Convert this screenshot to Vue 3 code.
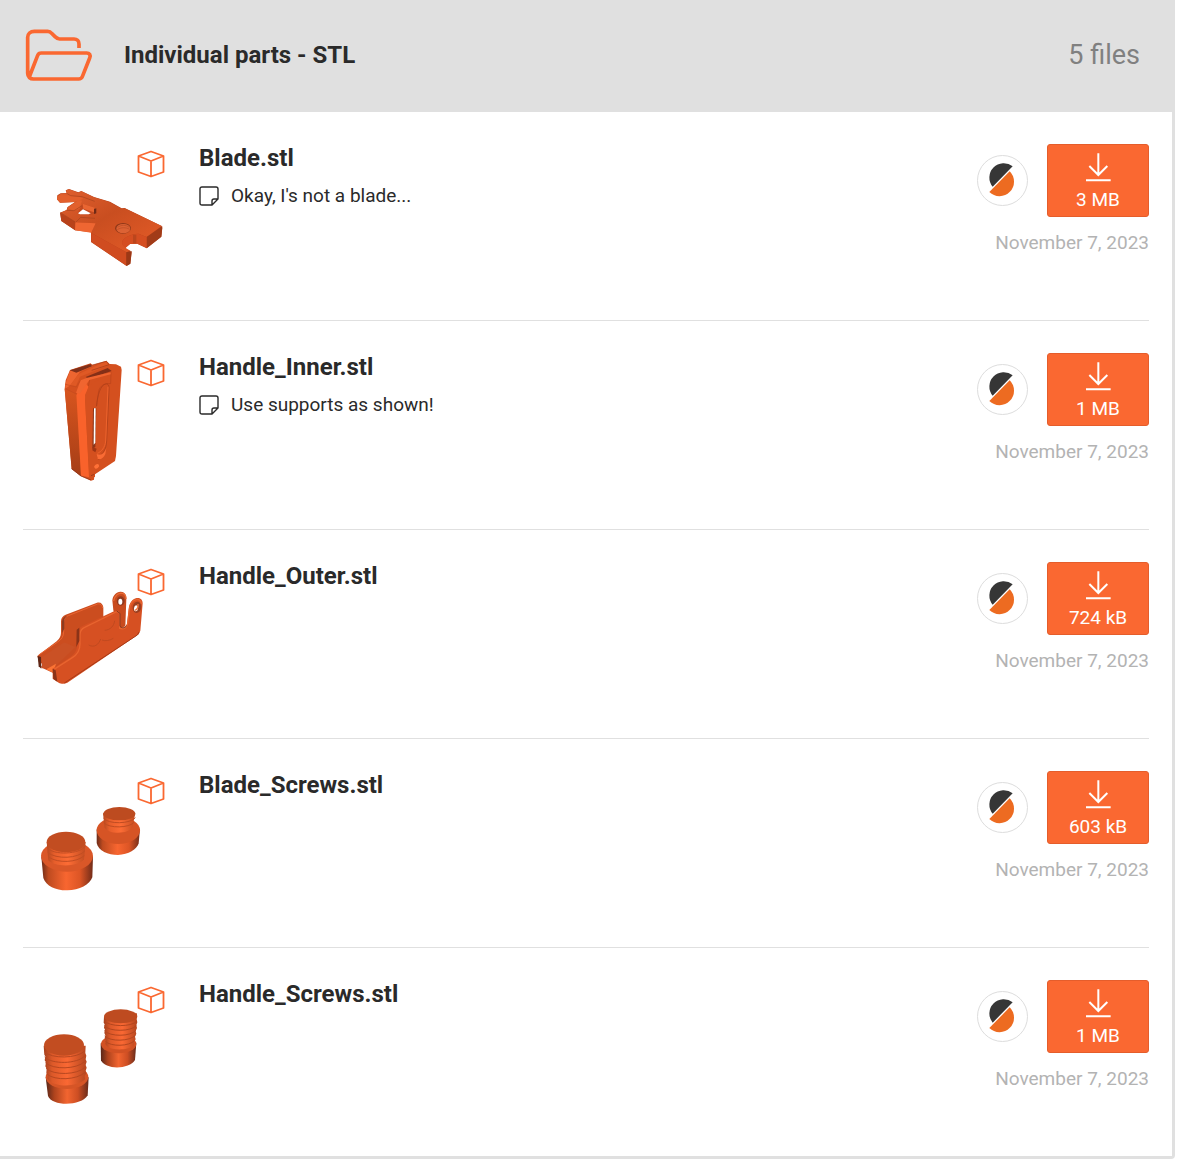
<template>
  <section class="folder">
    <header class="folder-header">
      <svg class="folder-icon" viewBox="75 84 204 162" aria-hidden="true">
        <path d="M237 144v-12c0-9-6-15-15-15h-43c-7 0-10-3-14-7l-10-10c-3-4-7-6-12-6h-40c-12 0-20 8-20 18v108c0 11 8 17 17 17h136c6 0 9-2 11-7l22-56c4-9-1-15-9-15H124c-6 0-9 2-11 7l-24 62" />
      </svg>
      <h2 class="folder-title">Individual parts - STL</h2>
      <span class="folder-count">{{ files.length }} files</span>
    </header>

    <ul class="files">
      <li v-for="file in files" :key="file.name" class="file">
        <div class="thumb">
          <svg v-if="file.shape === 'blade'" class="model" viewBox="9 12 456 432" aria-hidden="true">
            <defs>
              <linearGradient id="bladeTop" x1="0" y1="0" x2="1" y2="1">
                <stop offset="0" stop-color="#e0602f" />
                <stop offset="0.45" stop-color="#c94e20" />
                <stop offset="1" stop-color="#e65c28" />
              </linearGradient>
            </defs>
            <path d="M137 151L147 147L175 157L184 153L222 171L270 185L305 205L314 204L425 258L427 264L424 290L380 325L352 311L330 312L315 325L335 337L331 371L320 378L213 306V277L165 271L124 243L120 218L140 210L142 202L165 186L120 188L111 178L112 166L122 160L140 159z" fill="#b8421a" />
            <path d="M114 168L122 161L140 160L138 151L147 148L175 158L184 154L222 172L268 186L305 206L314 205L425 258L380 291L355 281C332 282 308 293 306 307C306 315 315 325 332 332L319 337L214 279L227 250L166 247L121 219L140 210L145 200L178 178z" fill="url(#bladeTop)" />
            <path d="M112 169L124 164L180 171L190 176L165 186L120 188L111 178z" fill="#e2602d" />
            <path d="M142 205L176 180L186 182L178 206L162 212z" fill="#e2602d" />
            <path d="M173 219L188 191L229 205V219L212 224H185z" fill="#c34a20" />
            <path d="M188 191L229 205V219L190 206z" fill="#e96632" />
            <path d="M174 220L189 208L212 220L206 223H180z" fill="#fff" />
            <path d="M222 206L229 205V220L222 222z" fill="#702a16" />
            <path d="M121 219L166 247V271L124 243z" fill="#b8421a" />
            <path d="M166 247L227 250L214 278L165 271z" fill="#ee6632" />
            <path d="M214 279L319 337V377L214 306z" fill="#d04c20" />
            <path d="M319 337L335 333L331 371L319 378z" fill="#9b3816" />
            <path d="M380 291L427 259L424 290L380 325z" fill="#a13b18" />
            <path d="M306 307C308 293 332 282 355 281L380 291V324L352 311L330 312L316 324C309 319 306 314 306 307z" fill="#d54e21" />
            <path d="M344 284v26" stroke="#bb461d" stroke-width="10" />
            <ellipse cx="309" cy="265" rx="24" ry="16" fill="#8f3819" />
            <ellipse cx="310" cy="266" rx="21" ry="14" fill="#dc6234" />
            <path d="M293 262c10-8 24-8 35 0M292 269c10-7 25-8 37-1" fill="none" stroke="#b84b24" stroke-width="2" />
            <path d="M140 160l12 7 34 3 38 14M140 211l22 1 24-15M122 218l44 28M168 246l14-14 43 3" fill="none" stroke="#a8421d" stroke-width="2" />
          </svg>

          <svg v-else-if="file.shape === 'inner'" class="model" viewBox="9 24 456 432" aria-hidden="true">
            <defs>
              <linearGradient id="innerSide" x1="0" y1="0" x2="0" y2="1">
                <stop offset="0" stop-color="#d8551f" />
                <stop offset="1" stop-color="#a53d16" />
              </linearGradient>
            </defs>
            <path d="M150 75L212 55L217 60L259 47L269 57L288 58L303 65L305 75L288 332L285 348L225 388V396H222V404L213 407L183 394L155 372L134 131L137 106z" fill="#d4501f" />
            <path d="M134 131L171 148L183 394L155 372z" fill="url(#innerSide)" />
            <path d="M169 148L199 117L205 125L195 166L208 397L183 392z" fill="#f9622b" />
            <path d="M195 150L208 120L270 86L303 70L285 341L224 386L222 403L207 398z" fill="#d4501f" />
            <path d="M205 123L210 100L273 82L272 116C255 113 240 122 236 138L229 185" fill="none" stroke="#b9431a" stroke-width="2" />
            <path d="M136 117L150 78L214 57L217 64L180 80L152 120L136 131z" fill="#ed6530" />
            <path d="M150 76L212 57L216 64L169 83z" fill="#80301a" />
            <path d="M150 121L176 87L258 49L269 59L180 95L168 123z" fill="#df5925" />
            <path d="M197 96L263 69L275 78L206 101z" fill="#842f17" />
            <path d="M213 61L259 49L267 59L215 76" fill="none" stroke="#a33a17" stroke-width="2" />
            <path d="M182 106L202 98L272 82V88L208 105L180 146L168 143z" fill="#f06530" />
            <path d="M136 118l33 8 12-20M136 131l35 17" fill="none" stroke="#c44a1e" stroke-width="2" />
            <path d="M230 183C232 150 242 120 257 117C265 115 268 122 267 135L260 288C259 311 250 326 236 335" fill="none" stroke="#a93c18" stroke-width="2" />
            <path d="M264 125L257 288C255 308 244 320 232 325" fill="none" stroke="#ed632d" stroke-width="3" />
            <path d="M219 190L217 311L226 306L229 190z" fill="#8d3519" />
            <path d="M222 190h5l-1 103-5 6z" fill="#fff" />
            <path d="M218 306l12 5-4 11-9-6zM231 334l14 3-9 8z" fill="#9e3515" />
            <path d="M230 327c15 7 24-4 29-18l-3 18c-5 12-14 18-23 15z" fill="#f96b34" />
            <ellipse cx="230" cy="364" rx="8" ry="6" transform="rotate(-35 230 364)" fill="#ff7138" />
            <path d="M155 371l28 22 30 12M213 392l10-4" fill="none" stroke="#85331c" stroke-width="2" />
          </svg>

          <svg v-else-if="file.shape === 'outer'" class="model" viewBox="9 6 456 432" aria-hidden="true">
            <path d="M62 322L98 338L190 290L250 165L130 240z" fill="#c94c20" />
            <path d="M52 288l54-41c12-9 17-17 17-31v-32c0-11 6-16 14-20l94-36c11-3 18 4 19 14v38l-100 86-50 63-43-23z" fill="#cb4d1f" />
            <path d="M56 285l57-39c12-8 18-17 18-31v-27c0-12 6-18 14-21l88-35c8-2 13 4 15 12" fill="none" stroke="#ea6431" stroke-width="3" />
            <path d="M53 288l10 3 1 35-8-7z" fill="#5f2716" />
            <path d="M65 292l68-45 33 14-62 60-38 4z" fill="#ca5125" />
            <path d="M79 328L108 311L100 338z" fill="#fb7434" />
            <path d="M280 151l-3-30c2-16 12-25 24-26 12-1 18 9 18 21l-3 83-19 7z" fill="#c84b1e" />
            <path d="M281 123c3-18 15-25 26-23 8 1 11 9 11 17" fill="none" stroke="#e66a36" stroke-width="4" />
            <ellipse cx="302" cy="123" rx="12" ry="14" fill="#90391e" />
            <ellipse cx="301" cy="125" rx="6" ry="9" fill="#fff" />
            <path d="M98 326l50-33c18-11 24-25 24-44v-28c0-11 6-18 14-22l96-45c7-3 13-2 17 4l2 42c11 6 17 2 20-8l5-44c1-18 11-32 24-34 12-2 18 6 18 16l-7 82-5 11-214 145c-8 5-19 4-26 0l-18-12z" fill="#d65022" />
            <path d="M102 328l55-35c16-10 23-23 23-42v-27c0-11 5-18 14-22l94-46c7-3 12 3 11 9v40c14 4 21-3 24-14l5-43c2-16 10-27 21-29 9-2 15 4 15 13" fill="none" stroke="#e8642f" stroke-width="4" />
            <path d="M98 326l9 5 5 34-12-8zM170 209l8-6v40l-9 18z" fill="#8b3318" />
            <path d="M290 153l10 7v39c8 7 13 5 20-2" fill="none" stroke="#84351d" stroke-width="3" />
            <ellipse cx="351" cy="142" rx="13" ry="17" transform="rotate(10 351 142)" fill="#9b3f20" />
            <ellipse cx="348" cy="145" rx="6" ry="9" transform="rotate(10 348 145)" fill="#fff" />
            <path d="M344 151c8-2 11-9 10-19" fill="none" stroke="#f17943" stroke-width="4" />
            <path d="M206 255c17 9 30-1 36-18M246 240c10 4 22 2 34-5M254 211c16-1 28-12 30-29" fill="none" stroke="#b5451e" stroke-width="2" />
            <path d="M357 216l-5 9-219 144" fill="none" stroke="#a83a17" stroke-width="3" />
            <path d="M126 188c0-12 6-17 15-21l-8 10v29l-7 13z" fill="#8d3b20" />
          </svg>

          <svg v-else-if="file.shape === 'bladeScrews'" class="model" viewBox="9 3 456 432" aria-hidden="true">
            <defs>
              <linearGradient id="metal">
                <stop offset="0" stop-color="#6c2b18" />
                <stop offset="0.14" stop-color="#bf4b20" />
                <stop offset="0.48" stop-color="#f86630" />
                <stop offset="0.75" stop-color="#dc5525" />
                <stop offset="1" stop-color="#712b18" />
              </linearGradient>
              <linearGradient id="thread">
                <stop offset="0" stop-color="#b5481f" />
                <stop offset="0.2" stop-color="#e65e2b" />
                <stop offset="0.55" stop-color="#fc6c35" />
                <stop offset="1" stop-color="#c24d21" />
              </linearGradient>
            </defs>
            <path d="M230 178v41c5 24 34 36 64 36 31-1 57-17 62-35l4-43z" fill="url(#metal)" />
            <ellipse cx="295" cy="181" rx="65" ry="41" fill="#d65425" />
            <path d="M249 130l5 43c12 21 72 20 83-1l9-42z" fill="url(#thread)" />
            <path d="M250 144c14 20 82 18 96-1M251 158c16 18 78 16 91-1" fill="none" stroke="#c04c22" stroke-width="3" />
            <ellipse cx="298" cy="131" rx="48" ry="20" fill="#bd4b20" />

            <path d="M64 260l6 64c8 25 40 38 72 37 36 0 68-18 75-39l2-63z" fill="url(#metal)" />
            <ellipse cx="141" cy="258" rx="78" ry="47" fill="#da5728" />
            <path d="M80 216l5 55c20 22 90 20 107-3l5-52z" fill="url(#thread)" />
            <path d="M81 233c19 24 99 20 115-5M83 247c24 22 93 19 112-5M87 262c27 18 83 16 106-5" fill="none" stroke="#c24d23" stroke-width="3" />
            <ellipse cx="138" cy="216" rx="58" ry="31" fill="#c24d21" />
          </svg>

          <svg v-else class="model" viewBox="9 15 456 432" aria-hidden="true">
            <defs>
              <linearGradient id="screw">
                <stop offset="0" stop-color="#562619" />
                <stop offset="0.2" stop-color="#ae431d" />
                <stop offset="0.5" stop-color="#f26530" />
                <stop offset="0.75" stop-color="#cd4e23" />
                <stop offset="1" stop-color="#672b1b" />
              </linearGradient>
              <linearGradient id="screwThread">
                <stop offset="0" stop-color="#a23f1c" />
                <stop offset="0.2" stop-color="#dc5929" />
                <stop offset="0.55" stop-color="#fa6833" />
                <stop offset="1" stop-color="#b5471f" />
              </linearGradient>
            </defs>
            <path d="M242 205l1 51c12 29 85 28 102-1l4-52z" fill="url(#screw)" />
            <ellipse cx="296" cy="207" rx="53" ry="28" fill="#d15124" />
            <path d="M252 125l-1 18 3 5-2 10 3 6-2 10 3 7-2 9 4 7-2 10 5 7c17 14 68 12 81-3v-10l5-8-2-8 4-9-2-8 4-9-2-8 3-9-2-10 1-17z" fill="url(#screwThread)" />
            <path d="M252 137c15 19 83 20 99 1M253 152c15 19 80 18 96 0M253 167c17 19 79 18 95-1M254 183c17 18 76 16 92-2M256 199c17 17 72 15 87-2" fill="none" stroke="#b4461f" stroke-width="3" />
            <ellipse cx="302" cy="124" rx="50" ry="21" fill="#be4b20" />

            <path d="M77 306l7 57c12 32 100 31 119-2l3-54z" fill="url(#screw)" />
            <ellipse cx="141" cy="306" rx="64" ry="36" fill="#d65526" />
            <path d="M71 212l2 27 3 5-2 12 4 6-2 12 4 7-1 12 4 8-1 10 6 7c24 20 85 17 107-5l-1-10 5-8-2-8 3-9-3-8 3-10-3-7 2-11-3-8 1-22z" fill="url(#screwThread)" />
            <path d="M73 230c21 22 99 21 121-2M74 246c22 23 98 21 120-3M76 263c24 22 94 20 118-3M78 280c23 22 93 20 117-3M80 297c25 21 91 18 115-5" fill="none" stroke="#b74720" stroke-width="3" />
            <ellipse cx="132" cy="210" rx="60" ry="32" fill="#c24d21" />
          </svg>

          <svg class="cube" viewBox="0 0 28 28" aria-hidden="true">
            <path d="M14 1.5L26.5 6v16L14 26.5 1.5 22V6zM1.5 6L14 11l12.500-5M14 11v15.500" />
          </svg>
        </div>

        <div class="info">
          <h3 class="file-name">{{ file.name }}</h3>
          <p v-if="file.note" class="note">
            <svg class="note-icon" viewBox="0 0 20 20" aria-hidden="true">
              <path d="M3 1h14q2 0 2 2v10l-6 6H3q-2 0-2-2V3q0-2 2-2zM19 13h-4q-2 0-2 2v4" />
            </svg>
            {{ file.note }}
          </p>
        </div>

        <div class="meta">
          <div class="actions">
            <button class="slicer" type="button" :aria-label="'Open ' + file.name + ' in slicer'">
              <svg viewBox="57 80 147 147" aria-hidden="true">
                <path d="M161 111A43 43 0 0 0 101 172z" fill="#363636" />
                <path d="M152 126A43 43 0 0 1 91 188z" fill="#ed6b21" />
              </svg>
            </button>
            <button class="download" type="button">
              <svg viewBox="375 68 78 87" aria-hidden="true">
                <path d="M415 69v64M388 107l27 27 27-27M378 150h74" />
              </svg>
              {{ file.size }}
            </button>
          </div>
          <time class="date" datetime="2023-11-07">November 7, 2023</time>
        </div>
      </li>
    </ul>
  </section>
</template>

<script setup>
const files = [
  { name: 'Blade.stl', note: "Okay, I's not a blade...", size: '3 MB', shape: 'blade' },
  { name: 'Handle_Inner.stl', note: 'Use supports as shown!', size: '1 MB', shape: 'inner' },
  { name: 'Handle_Outer.stl', size: '724 kB', shape: 'outer' },
  { name: 'Blade_Screws.stl', size: '603 kB', shape: 'bladeScrews' },
  { name: 'Handle_Screws.stl', size: '1 MB', shape: 'handleScrews' },
]
</script>

<style>
body {
  margin: 0;
  background: #fff;
}
</style>

<style scoped>
.folder {
  box-sizing: border-box;
  margin-right: 3px;
  border-right: 3px solid #e0e0e0;
  border-bottom: 3px solid #e0e0e0;
  border-radius: 0 0 4px 0;
  color: #2a2a2a;
  font-family: Roboto, 'Liberation Sans', sans-serif;
  font-size: 19px;
  line-height: 24px;
}

.folder-header {
  display: flex;
  align-items: center;
  gap: 31px;
  height: 112px;
  box-sizing: border-box;
  padding: 0 32px 3px 25px;
  background: #e0e0e0;
}

.folder-icon {
  width: 68px;
  height: 54px;
  fill: none;
  stroke: #fa6831;
  stroke-width: 11;
}

.folder-title,
.file-name {
  margin: 0;
  font-size: 24px;
  font-weight: 700;
  line-height: 28px;
}

.folder-count {
  margin-left: auto;
  color: #808080;
  font-size: 27px;
}

.files {
  margin: 0;
  padding: 0 23px;
  list-style: none;
}

.file {
  display: flex;
  padding: 32px 0;
  border-bottom: 1px solid #e0e0e0;
}

.file:last-child {
  border-bottom: 0;
}

.thumb {
  position: relative;
  flex: none;
  width: 152px;
  height: 144px;
  margin-right: 24px;
}

.model {
  display: block;
  width: 152px;
  height: 144px;
}

.cube {
  position: absolute;
  top: 6px;
  right: 10px;
  width: 28px;
  height: 28px;
  fill: none;
  stroke: #fa6831;
  stroke-width: 1.8;
  stroke-linejoin: round;
}

.info {
  flex: 1;
  min-width: 0;
}

.note {
  display: flex;
  align-items: center;
  gap: 12px;
  margin: 12px 0 0;
}

.note-icon {
  flex: none;
  width: 20px;
  height: 20px;
  fill: none;
  stroke: #2a2a2a;
  stroke-width: 1.4;
}

.meta {
  display: flex;
  flex-direction: column;
  align-items: flex-end;
  gap: 14px;
}

.actions {
  display: flex;
  align-items: center;
  gap: 19px;
}

.slicer {
  width: 51px;
  height: 51px;
  padding: 0;
  border: 1px solid #ddd;
  border-radius: 50%;
  background: #fff;
  cursor: pointer;
}

.slicer svg {
  display: block;
  width: 49px;
  height: 49px;
}

.download {
  display: flex;
  flex-direction: column;
  align-items: center;
  gap: 6px;
  box-sizing: border-box;
  width: 102px;
  padding: 8px 0 4px;
  border: 1px solid #e55d2b;
  border-radius: 3px;
  background: #fa6831;
  color: #fff;
  font: inherit;
  cursor: pointer;
}

.download svg {
  width: 26px;
  height: 29px;
  fill: none;
  stroke: #fff;
  stroke-width: 6;
}

.date {
  color: #b3b3b3;
}
</style>
